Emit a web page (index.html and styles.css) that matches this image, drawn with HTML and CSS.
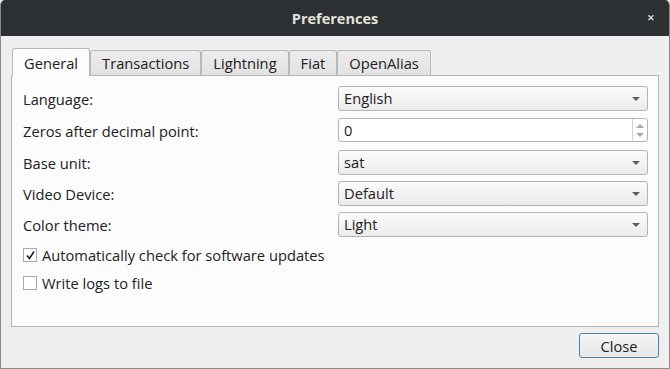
FILE: index.html
```html
<!DOCTYPE html>
<html lang="en">
<head>
    <meta charset="UTF-8">
    <title>Preferences</title>
    <link rel="stylesheet" href="styles.css">
</head>
<body>
    <div class="window">
        <div class="titlebar">
            <span class="title">Preferences</span>
            <span class="close-x">&#x2715;</span>
        </div>
        <div class="content">
            <div class="tabs">
                <div class="tab active">General</div>
                <div class="tab">Transactions</div>
                <div class="tab">Lightning</div>
                <div class="tab">Fiat</div>
                <div class="tab">OpenAlias</div>
            </div>
            <div class="pane">
                <div class="form">
                    <label>Language:</label>
                    <div class="combo">English<span class="arrow"></span></div>
                    <label>Zeros after decimal point:</label>
                    <div class="spin">
                        <span class="spin-value">0</span>
                        <span class="spin-btns">
                            <span class="up"></span>
                            <span class="down"></span>
                        </span>
                    </div>
                    <label>Base unit:</label>
                    <div class="combo">sat<span class="arrow"></span></div>
                    <label>Video Device:</label>
                    <div class="combo">Default<span class="arrow"></span></div>
                    <label>Color theme:</label>
                    <div class="combo">Light<span class="arrow"></span></div>
                </div>
                <div class="check-row">
                    <span class="box checked">
                        <svg width="11" height="11" viewBox="0 0 11 11"><path d="M2 5.5 L4.5 8.5 L9 1.5" fill="none" stroke="#1a1a1a" stroke-width="1.6"/></svg>
                    </span>
                    <span>Automatically check for software updates</span>
                </div>
                <div class="check-row">
                    <span class="box"></span>
                    <span>Write logs to file</span>
                </div>
            </div>
            <div class="footer">
                <button class="btn">Close</button>
            </div>
        </div>
    </div>
</body>
</html>
```

FILE: styles.css
```css
body {
    margin: 0;
    font-family: "Open Sans", "Liberation Sans", sans-serif;
    font-size: 14.7px;
    color: #222;
    background: #efefef;
}
.window {
    width: 670px;
    height: 369px;
    box-sizing: border-box;
    border: 1px solid #8a8a8a;
    border-top: none;
    border-radius: 5px 5px 0 0;
    background: #efefef;
    display: flex;
    flex-direction: column;
    overflow: hidden;
}
.titlebar {
    height: 36px;
    background: #2d3033;
    display: flex;
    align-items: center;
    justify-content: center;
    position: relative;
    flex-shrink: 0;
}
.title {
    color: #e4e2dc;
    font-weight: bold;
    font-size: 14.5px;
}
.close-x {
    position: absolute;
    right: 14px;
    top: 11px;
    color: #dcdcdc;
    font-size: 9px;
    font-weight: bold;
}
.content {
    flex: 1;
    padding: 12px 10px 10px 10px;
    display: flex;
    flex-direction: column;
}
.tabs {
    display: flex;
    padding-left: 1px;
    align-items: flex-end;
    margin-top: -1px;
}
.tab {
    height: 24px;
    line-height: 24px;
    padding: 0 11px;
    background: linear-gradient(#ececec, #e2e2e2);
    border: 1px solid #b8b8b8;
    border-bottom: none;
    border-radius: 3px 3px 0 0;
}
.tab.active {
    height: 27px;
    line-height: 28px;
    background: #fcfcfc;
    position: relative;
    top: 1px;
}
.pane {
    height: 240px;
    background: #fcfcfc;
    border: 1px solid #b5b5b5;
    padding: 10px 10px 0 11px;
}
.form {
    display: grid;
    grid-template-columns: 1fr 310px;
    row-gap: 6px;
    align-items: center;
}
.combo {
    position: relative;
    height: 23px;
    line-height: 23px;
    padding: 0 5px;
    border: 1px solid #b3b3b3;
    border-radius: 3px;
    background: linear-gradient(#fbfbfb, #ebebeb);
}
.arrow {
    position: absolute;
    right: 7px;
    top: 10px;
    width: 0;
    height: 0;
    border-left: 4px solid transparent;
    border-right: 4px solid transparent;
    border-top: 4px solid #5c5c5c;
}
.spin {
    height: 22px;
    border: 1px solid #b3b3b3;
    border-radius: 3px;
    background: #fff;
    display: flex;
    margin: 1px 0 2px;
}
.spin-value {
    flex: 1;
    line-height: 22px;
    padding-left: 5px;
}
.spin-btns {
    width: 14px;
    border-left: 1px solid #d0d0d0;
    display: flex;
    flex-direction: column;
    align-items: center;
    justify-content: center;
    gap: 5px;
}
.up, .down {
    width: 0;
    height: 0;
    border-left: 4px solid transparent;
    border-right: 4px solid transparent;
}
.up {
    border-bottom: 4px solid #a8a8a8;
}
.down {
    border-top: 4px solid #a8a8a8;
}
.check-row {
    display: flex;
    align-items: center;
    gap: 5px;
    height: 18px;
    line-height: 18px;
    margin-top: 9px;
}
.check-row + .check-row {
    margin-top: 10px;
}
.box {
    width: 12px;
    height: 12px;
    border: 1px solid #a9a9a9;
    background: #fff;
    display: flex;
    align-items: center;
    justify-content: center;
}
.footer {
    display: flex;
    justify-content: flex-end;
    margin-top: 6px;
}
.btn {
    width: 80px;
    height: 25px;
    font-family: inherit;
    font-size: 14.7px;
    color: #222;
    border: 1px solid #4f80ad;
    border-radius: 3px;
    background: linear-gradient(#f6f6f6, #e6e6e6);
    padding: 0;
}
```
